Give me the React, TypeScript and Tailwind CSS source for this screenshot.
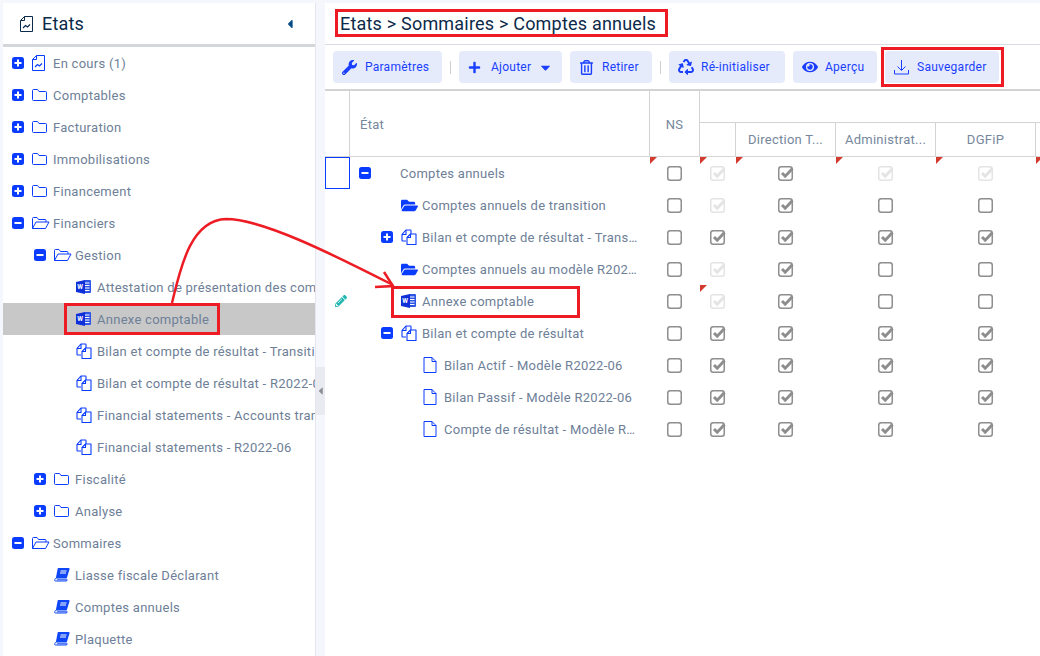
import React from "react";
import { FaWrench, FaPlus, FaRegTrashAlt, FaRecycle, FaEye, FaCaretDown, FaCaretLeft, FaPencilAlt, FaFolderOpen } from "react-icons/fa";

const BLUE = "#0a3cff";

function Expander({ open }: { open?: boolean }) {
  return (
    <svg width="12" height="12" viewBox="0 0 12 12" className="shrink-0">
      <rect width="12" height="12" rx="2.5" fill={BLUE} />
      <rect x="2.5" y="5" width="7" height="2" fill="#fff" />
      {!open && <rect x="5" y="2.5" width="2" height="7" fill="#fff" />}
    </svg>
  );
}
function Folder() {
  return (
    <svg width="15" height="14" viewBox="0 0 15 14" fill="none" stroke={BLUE} className="shrink-0">
      <path d="M.5 2.5v9a1 1 0 0 0 1 1h12a1 1 0 0 0 1-1V4.5a1 1 0 0 0-1-1H7L5.5 1.5h-4a1 1 0 0 0-1 1z" />
    </svg>
  );
}
function FolderOpenOutline() {
  return (
    <svg width="18" height="14" viewBox="0 0 18 14" fill="none" stroke={BLUE} className="shrink-0">
      <path d="M.5 12.5v-10a1 1 0 0 1 1-1H5L6.5 3.5H13a1 1 0 0 1 1 1V6" />
      <path d="M.5 12.5L4 6h13l-3.5 6.5z" strokeLinejoin="round" />
    </svg>
  );
}
function Word() {
  return (
    <svg width="15" height="14" viewBox="0 0 15 14" className="shrink-0">
      <path d="M8 0h6a1 1 0 0 1 1 1v11a1 1 0 0 1-1 1H8z" fill="#2c55e8" />
      <path d="M9 3h4.5M9 5.5h4.5M9 8h4.5M9 10.5h4.5" stroke="#fff" />
      <path d="M0 2l9-2v14l-9-2z" fill="#0f2fd8" />
      <text x="1.2" y="9" fontSize="6.5" fontWeight="700" fill="#fff" fontFamily="Roboto, sans-serif">W</text>
    </svg>
  );
}
function CopyDoc() {
  return (
    <svg width="16" height="16" viewBox="0 0 16 16" fill="none" stroke={BLUE} strokeWidth="1.1" className="shrink-0">
      <path d="M10 5V1.5a.5.5 0 0 0-.5-.5H5L1 5.5v6a.5.5 0 0 0 .5.5H5" />
      <path d="M5 1v4.5H1" />
      <path d="M6 15.5V8.5L9.5 5h5.5v10.5z" fill="#fff" strokeLinejoin="round" />
      <path d="M9.5 5v3.5H6" />
    </svg>
  );
}
function Doc() {
  return (
    <svg width="14" height="16" viewBox="0 0 14 16" fill="none" stroke={BLUE} className="shrink-0">
      <path d="M1 .5h8l4 4v11H1z" strokeLinejoin="round" />
      <path d="M9 .5v4h4" />
    </svg>
  );
}
function ChartDoc({ color = BLUE }: { color?: string }) {
  return (
    <svg width="13" height="16" viewBox="0 0 13 16" fill="none" stroke={color} className="shrink-0">
      <path d="M4.5.5h8v15H.5V4.5z" strokeLinejoin="round" />
      <path d="M4.5.5v4h-4" />
      <path d="M3 12l2.5-2.5 2 1.5L10 8.5" strokeWidth="1.2" />
    </svg>
  );
}
function Book() {
  return (
    <svg width="16" height="14" viewBox="0 0 16 14" className="shrink-0">
      <path d="M4.5 0h10a1 1 0 0 1 1 1.3l-2.8 9.2H1.8L3.6 1a1 1 0 0 1 .9-1z" fill="#0f46f5" />
      <path d="M1.8 10.5a1.4 1.4 0 0 0-.6 2.5h11.3l.7-1.2H3" fill="none" stroke="#0f46f5" />
      <path d="M6.5 3h6M6 5h6" stroke="#fff" />
    </svg>
  );
}
function Check({ state }: { state: 0 | 1 | 2 }) {
  const c = state === 1 ? "#e4e4e4" : "#8e8e8e";
  return (
    <svg width="17" height="15" viewBox="0 0 17 15" fill="none" className="shrink-0">
      <rect x=".75" y=".75" width="13.5" height="13.5" rx="2.5" stroke={c} strokeWidth="1.5" />
      {state !== 0 && <path d="M4 7l3.2 3.2 7.3-7.7" stroke={c} strokeWidth="3" />}
    </svg>
  );
}
function Tri() {
  return (
    <svg width="7" height="7" viewBox="0 0 7 7" className="absolute left-0 top-0">
      <path d="M0 0h7L0 7z" fill="#d33b2c" />
    </svg>
  );
}

type Icon = "folder" | "open" | "word" | "copy" | "doc" | "chart" | "book" | "filled" | "none";
const iconOf: Record<Icon, React.ReactNode> = {
  folder: <Folder />,
  open: <FolderOpenOutline />,
  word: <Word />,
  copy: <CopyDoc />,
  doc: <Doc />,
  chart: <ChartDoc />,
  book: <Book />,
  filled: <FaFolderOpen size={17} color={BLUE} />,
  none: null,
};

function Node({ label, icon, exp, pad, selected, cut }: { label: string; icon: Icon; exp?: "plus" | "minus"; pad: string; selected?: boolean; cut?: boolean }) {
  return (
    <div className={`flex h-8 items-center overflow-hidden whitespace-nowrap ${pad} ${selected ? "bg-[#c8c8c8]" : ""}`}>
      <span className="flex w-[20px] shrink-0 items-center">{exp && <Expander open={exp === "minus"} />}</span>
      <span className="flex w-[21px] shrink-0 items-center">{iconOf[icon]}</span>
      <span className={`pt-[2px] ${cut ? "truncate" : ""}`}>{label}</span>
    </div>
  );
}

const L0 = "pl-[9px]";
const L1 = "pl-[31px]";
const L2 = "pl-[53px]";

const side: { label: string; icon: Icon; exp?: "plus" | "minus"; pad: string; selected?: boolean }[] = [
  { label: "En cours (1)", icon: "chart", exp: "plus", pad: L0 },
  { label: "Comptables", icon: "folder", exp: "plus", pad: L0 },
  { label: "Facturation", icon: "folder", exp: "plus", pad: L0 },
  { label: "Immobilisations", icon: "folder", exp: "plus", pad: L0 },
  { label: "Financement", icon: "folder", exp: "plus", pad: L0 },
  { label: "Financiers", icon: "open", exp: "minus", pad: L0 },
  { label: "Gestion", icon: "open", exp: "minus", pad: L1 },
  { label: "Attestation de présentation des comptes annuels", icon: "word", pad: L2 },
  { label: "Annexe comptable", icon: "word", pad: L2, selected: true },
  { label: "Bilan et compte de résultat - Transition modèle", icon: "copy", pad: L2 },
  { label: "Bilan et compte de résultat - R2022-06 modèle", icon: "copy", pad: L2 },
  { label: "Financial statements - Accounts transition", icon: "copy", pad: L2 },
  { label: "Financial statements - R2022-06", icon: "copy", pad: L2 },
  { label: "Fiscalité", icon: "folder", exp: "plus", pad: L1 },
  { label: "Analyse", icon: "folder", exp: "plus", pad: L1 },
  { label: "Sommaires", icon: "open", exp: "minus", pad: L0 },
  { label: "Liasse fiscale Déclarant", icon: "book", pad: L1 },
  { label: "Comptes annuels", icon: "book", pad: L1 },
  { label: "Plaquette", icon: "book", pad: L1 },
];

const table: { label: string; icon: Icon; exp?: "plus" | "minus"; pad: string; checks: (0 | 1 | 2)[] }[] = [
  { label: "Comptes annuels", icon: "none", exp: "minus", pad: L0, checks: [0, 1, 2, 1, 1] },
  { label: "Comptes annuels de transition", icon: "filled", pad: L1, checks: [0, 1, 2, 0, 0] },
  { label: "Bilan et compte de résultat - Transition", icon: "copy", exp: "plus", pad: L1, checks: [0, 2, 2, 2, 2] },
  { label: "Comptes annuels au modèle R2022-06", icon: "filled", pad: L1, checks: [0, 1, 2, 0, 0] },
  { label: "Annexe comptable", icon: "word", pad: L1, checks: [0, 1, 2, 0, 0] },
  { label: "Bilan et compte de résultat", icon: "copy", exp: "minus", pad: L1, checks: [0, 2, 2, 2, 2] },
  { label: "Bilan Actif - Modèle R2022-06", icon: "doc", pad: L2, checks: [0, 2, 2, 2, 2] },
  { label: "Bilan Passif - Modèle R2022-06", icon: "doc", pad: L2, checks: [0, 2, 2, 2, 2] },
  { label: "Compte de résultat - Modèle R2022-06", icon: "doc", pad: L2, checks: [0, 2, 2, 2, 2] },
];

const COLS = "grid grid-cols-[25px_300px_50px_36px_100px_100px_100px_1fr]";

function Btn({ icon, label, w, children }: { icon: React.ReactNode; label: string; w: string; children?: React.ReactNode }) {
  return (
    <button className={`flex h-8 items-center rounded bg-[#e6ebfb] pl-[9px] text-[12px] tracking-[0.25px] text-[#1a3fff] ${w}`}>
      <span className="flex w-[23px] shrink-0 items-center">{icon}</span>
      <span>{label}</span>
      {children}
    </button>
  );
}
const Sep = () => <span className="mx-[8px] h-[13px] w-px bg-[#cfcfcf]" />;

function Mark({ className }: { className: string }) {
  return <div className={`absolute border-[3px] border-[#ed1c24] ${className}`} />;
}

export default function App() {
  return (
    <div className="relative flex h-[656px] w-[1040px] overflow-hidden bg-[#f5f7fc] text-[13px] tracking-[0.27px] text-[#6e8098]" style={{ fontFamily: "Roboto, 'Liberation Sans', sans-serif" }}>
      {/* Sidebar */}
      <aside className="ml-[3px] mt-[3px] flex w-[312px] shrink-0 flex-col bg-white shadow-[1px_0_0_#e3e6ef]">
        <div className="box-content flex h-[41px] items-center border-b-[3px] border-[#d3d6da] pl-[17px] pr-[18px] text-[#0c2a4a]">
          <ChartDoc color="#0c2a4a" />
          <span className="ml-[9px] flex-1 text-[18px] tracking-[0.2px]">Etats</span>
          <FaCaretLeft size={14} color="#064b86" />
        </div>
        <div className="flex-1 overflow-hidden">
          {side.map((r) => (
            <Node key={r.label} {...r} />
          ))}
        </div>
      </aside>

      {/* Splitter */}
      <div className="flex w-[10px] shrink-0 items-center pl-px">
        <div className="mt-[126px] flex h-[48px] w-[9px] items-center justify-center bg-[#e9ebf0]">
          <FaCaretLeft size={12} color="#8a8f96" />
        </div>
      </div>

      {/* Main */}
      <main className="mt-[3px] flex min-w-0 flex-1 flex-col bg-white">
        <div className="box-content flex h-[41px] items-center border-b border-[#d8dce2] pl-[15px] text-[18px] tracking-[0.2px] text-[#0c2a4a]">
          Etats &gt; Sommaires &gt; Comptes annuels
        </div>
        <div className="box-content flex h-[44px] items-center border-b-[2px] border-[#d3d3d3] pl-[8px]">
          <Btn w="w-[109px]" label="Paramètres" icon={<FaWrench size={15} />} />
          <Sep />
          <Btn w="w-[103px]" label="Ajouter" icon={<FaPlus size={13} />}>
            <FaCaretDown size={15} className="ml-[7px]" />
          </Btn>
          <span className="w-[8px]" />
          <Btn w="w-[82px]" label="Retirer" icon={<FaRegTrashAlt size={15} />} />
          <Sep />
          <Btn w="w-[116px]" label="Ré-initialiser" icon={<FaRecycle size={16} />} />
          <span className="w-[8px]" />
          <Btn w="w-[84px]" label="Aperçu" icon={<FaEye size={16} />} />
          <span className="w-[8px]" />
          <Btn
            w="w-[114px]"
            label="Sauvegarder"
            icon={
              <svg width="15" height="16" viewBox="0 0 15 16" fill="none" stroke="#1a3fff">
                <path d="M7.5 1v10M3.5 7.5l4 4 4-4M.5 11v4h14v-4" />
              </svg>
            }
          />
        </div>

        {/* Table head */}
        <div className={`${COLS} h-[66px] border-b border-[#d6d6d6] text-[#76879c]`}>
          <div className="border-r border-[#d3d3d3]" />
          <div className="flex items-center border-r border-[#d3d3d3] pl-[10px] pt-[2px]">État</div>
          <div className="flex items-center justify-center border-r border-[#d3d3d3] pt-[2px]">NS</div>
          <div className="col-span-5 grid grid-cols-[36px_100px_100px_100px_1fr] grid-rows-[32px_1fr]">
            <div className="col-span-5 border-b border-[#d3d3d3]" />
            <div className="border-r border-[#d3d3d3]" />
            <div className="flex items-center justify-center border-r border-[#d3d3d3] pt-px">Direction T...</div>
            <div className="flex items-center justify-center border-r border-[#d3d3d3] pt-px">Administrat...</div>
            <div className="flex items-center justify-center border-r border-[#d3d3d3] pt-px">DGFiP</div>
            <div />
          </div>
        </div>

        {/* Table body */}
        {table.map((r, i) => (
          <div key={r.label} className={`${COLS} h-8`}>
            <div className={`flex items-center justify-center ${i === 0 ? "border border-[#0a3cff]" : ""}`}>
              {r.label === "Annexe comptable" && <FaPencilAlt size={12} color="#1fb7b0" className="ml-[6px]" />}
            </div>
            <div className="min-w-0 pr-[10px]">
              <Node label={r.label} icon={r.icon} exp={r.exp} pad={r.pad} cut />
            </div>
            {r.checks.map((c, j) => (
              <div key={j} className="relative flex items-center justify-center">
                {(i === 0 || (i === 4 && j === 1)) && <Tri />}
                <Check state={c} />
              </div>
            ))}
            <div className="relative">{i === 0 && <Tri />}</div>
          </div>
        ))}
      </main>

      {/* Annotations drawn over the screenshot */}
      <Mark className="left-[335px] top-[9px] h-[28px] w-[333px]" />
      <Mark className="left-[881px] top-[47px] h-[40px] w-[123px]" />
      <Mark className="left-[64px] top-[303px] h-[32px] w-[156px]" />
      <Mark className="left-[391px] top-[286px] h-[32px] w-[189px]" />
      <svg width="1040" height="656" viewBox="0 0 1040 656" fill="none" stroke="#ed1c24" strokeWidth="2.5" className="pointer-events-none absolute left-0 top-0">
        <path d="M172 303C180 270 190 220 226 219C262 219 330 253 393 285" />
        <path d="M384 272L393 286L375 287" />
      </svg>
    </div>
  );
}
